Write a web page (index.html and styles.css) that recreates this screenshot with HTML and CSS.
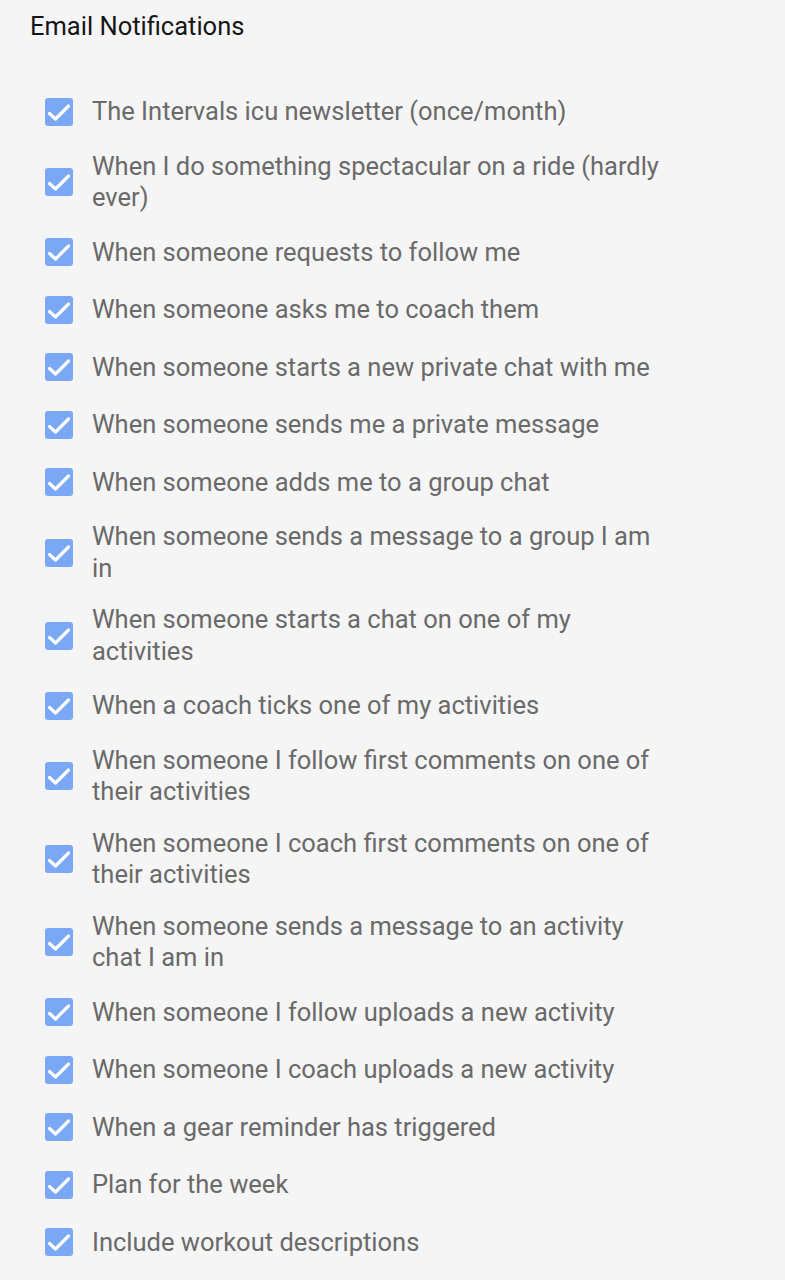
FILE: index.html
```html
<!DOCTYPE html>
<html lang="en">
<head>
  <meta charset="UTF-8">
  <meta name="viewport" content="width=device-width, initial-scale=1.0">
  <title>Email Notifications</title>
  <link rel="stylesheet" href="styles.css">
</head>
<body>
  <div class="settings">
    <h2 class="title">Email Notifications</h2>

    <ul class="options">
      <li class="option"><span class="box"><svg viewBox="0 0 28 28"><path d="M4.5 15.5l6 5.5 13-13"/></svg></span><span class="label">The Intervals icu newsletter (once/month)</span></li>
      <li class="option"><span class="box"><svg viewBox="0 0 28 28"><path d="M4.5 15.5l6 5.5 13-13"/></svg></span><span class="label">When I do something spectacular on a ride (hardly ever)</span></li>
      <li class="option"><span class="box"><svg viewBox="0 0 28 28"><path d="M4.5 15.5l6 5.5 13-13"/></svg></span><span class="label">When someone requests to follow me</span></li>
      <li class="option"><span class="box"><svg viewBox="0 0 28 28"><path d="M4.5 15.5l6 5.5 13-13"/></svg></span><span class="label">When someone asks me to coach them</span></li>
      <li class="option"><span class="box"><svg viewBox="0 0 28 28"><path d="M4.5 15.5l6 5.5 13-13"/></svg></span><span class="label">When someone starts a new private chat with me</span></li>
      <li class="option"><span class="box"><svg viewBox="0 0 28 28"><path d="M4.5 15.5l6 5.5 13-13"/></svg></span><span class="label">When someone sends me a private message</span></li>
      <li class="option"><span class="box"><svg viewBox="0 0 28 28"><path d="M4.5 15.5l6 5.5 13-13"/></svg></span><span class="label">When someone adds me to a group chat</span></li>
      <li class="option"><span class="box"><svg viewBox="0 0 28 28"><path d="M4.5 15.5l6 5.5 13-13"/></svg></span><span class="label">When someone sends a message to a group I am in</span></li>
      <li class="option"><span class="box"><svg viewBox="0 0 28 28"><path d="M4.5 15.5l6 5.5 13-13"/></svg></span><span class="label">When someone starts a chat on one of my activities</span></li>
      <li class="option"><span class="box"><svg viewBox="0 0 28 28"><path d="M4.5 15.5l6 5.5 13-13"/></svg></span><span class="label">When a coach ticks one of my activities</span></li>
      <li class="option"><span class="box"><svg viewBox="0 0 28 28"><path d="M4.5 15.5l6 5.5 13-13"/></svg></span><span class="label">When someone I follow first comments on one of their activities</span></li>
      <li class="option"><span class="box"><svg viewBox="0 0 28 28"><path d="M4.5 15.5l6 5.5 13-13"/></svg></span><span class="label">When someone I coach first comments on one of their activities</span></li>
      <li class="option"><span class="box"><svg viewBox="0 0 28 28"><path d="M4.5 15.5l6 5.5 13-13"/></svg></span><span class="label">When someone sends a message to an activity chat I am in</span></li>
      <li class="option"><span class="box"><svg viewBox="0 0 28 28"><path d="M4.5 15.5l6 5.5 13-13"/></svg></span><span class="label">When someone I follow uploads a new activity</span></li>
      <li class="option"><span class="box"><svg viewBox="0 0 28 28"><path d="M4.5 15.5l6 5.5 13-13"/></svg></span><span class="label">When someone I coach uploads a new activity</span></li>
      <li class="option"><span class="box"><svg viewBox="0 0 28 28"><path d="M4.5 15.5l6 5.5 13-13"/></svg></span><span class="label">When a gear reminder has triggered</span></li>
      <li class="option"><span class="box"><svg viewBox="0 0 28 28"><path d="M4.5 15.5l6 5.5 13-13"/></svg></span><span class="label">Plan for the week</span></li>
      <li class="option"><span class="box"><svg viewBox="0 0 28 28"><path d="M4.5 15.5l6 5.5 13-13"/></svg></span><span class="label">Include workout descriptions</span></li>
    </ul>
  </div>
</body>
</html>
```

FILE: styles.css
```css
* {
  margin: 0;
  padding: 0;
  box-sizing: border-box;
}

body {
  font-family: Roboto, "Liberation Sans", sans-serif;
  background-color: #f5f5f5;
}

.settings {
  padding: 11px 0 0 30px;
}

.title {
  font-size: 25.5px;
  font-weight: 400;
  line-height: 30px;
  color: #151515;
}

.options {
  list-style: none;
  margin-top: 42px;
  padding-left: 15px;
}

.option {
  display: flex;
  align-items: center;
  gap: 19px;
  min-height: 57.5px;
  padding: 10px 0;
}

.box {
  flex: none;
  width: 28px;
  height: 28px;
  border-radius: 3px;
  background-color: #7aa8f5;
}

.box svg {
  display: block;
  width: 28px;
  height: 28px;
  fill: none;
  stroke: white;
  stroke-width: 3.2;
  stroke-linecap: round;
  stroke-linejoin: round;
}

.label {
  width: 575px;
  font-size: 25.5px;
  line-height: 31.5px;
  color: #6a6a6a;
}
```
